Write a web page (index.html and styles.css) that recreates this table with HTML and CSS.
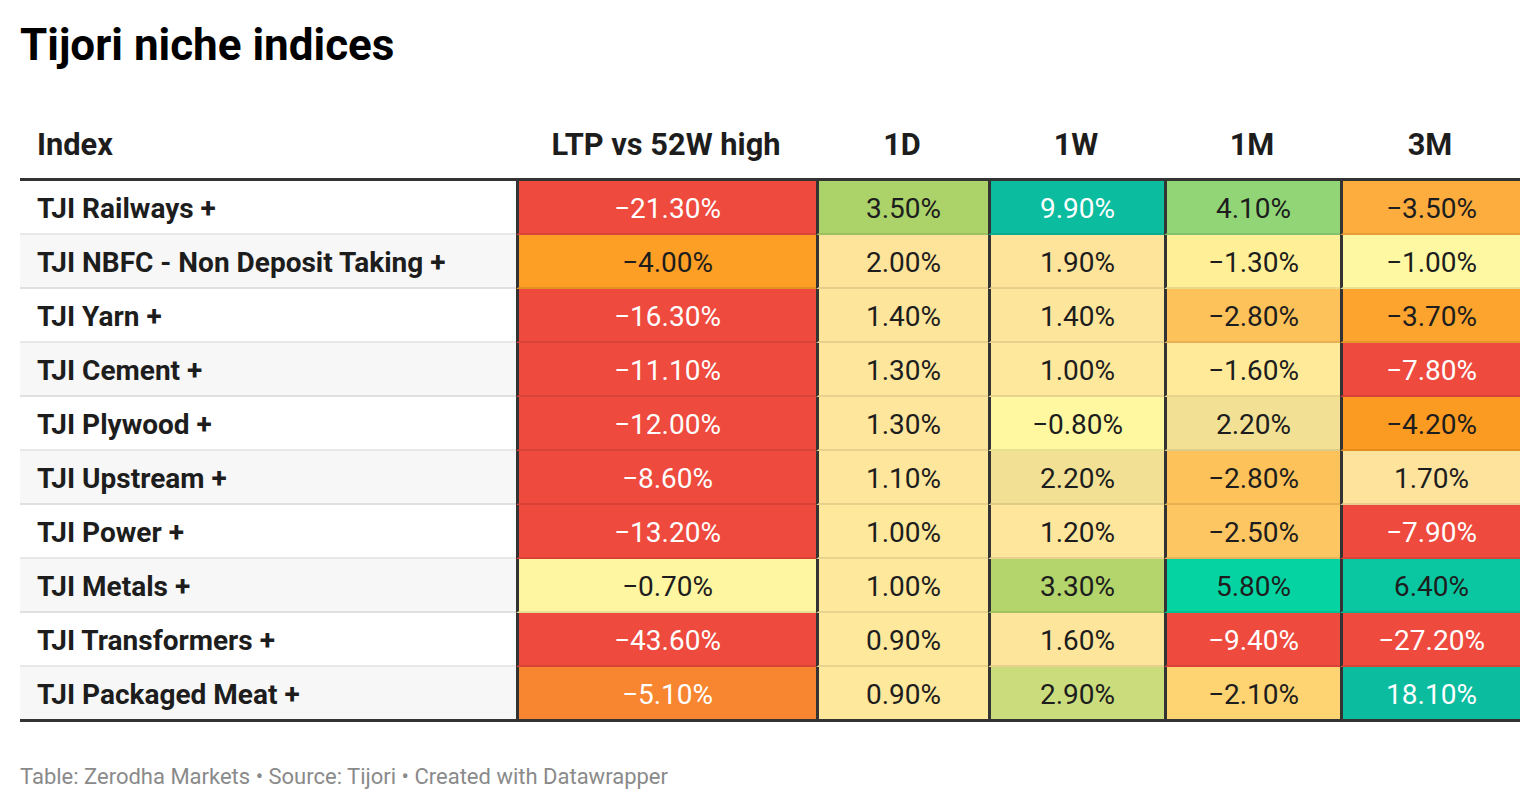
FILE: index.html
```html
<!DOCTYPE html>
<html lang="en">
<head>
<meta charset="utf-8">
<title>Tijori niche indices</title>
<link rel="stylesheet" href="styles.css">
</head>
<body>
<div class="chart">
  <h1 class="title">Tijori niche indices</h1>
  <div class="table">
    <div class="th th-left">Index</div>
    <div class="th">LTP vs 52W high</div>
    <div class="th">1D</div>
    <div class="th">1W</div>
    <div class="th">1M</div>
    <div class="th">3M</div>

    <div class="name">TJI Railways +</div>
    <div class="val light" style="background:#ee4a3e">−21.30%</div>
    <div class="val" style="background:#acd26a">3.50%</div>
    <div class="val light" style="background:#0bbc9f">9.90%</div>
    <div class="val" style="background:#92d577">4.10%</div>
    <div class="val" style="background:#fdad3d">−3.50%</div>

    <div class="name alt">TJI NBFC - Non Deposit Taking +</div>
    <div class="val" style="background:#fd9f24">−4.00%</div>
    <div class="val" style="background:#fee39b">2.00%</div>
    <div class="val" style="background:#fee49b">1.90%</div>
    <div class="val" style="background:#fff098">−1.30%</div>
    <div class="val" style="background:#fff8a3">−1.00%</div>

    <div class="name">TJI Yarn +</div>
    <div class="val light" style="background:#ee4a3e">−16.30%</div>
    <div class="val" style="background:#fee59c">1.40%</div>
    <div class="val" style="background:#fee59c">1.40%</div>
    <div class="val" style="background:#fec25b">−2.80%</div>
    <div class="val" style="background:#fca42e">−3.70%</div>

    <div class="name alt">TJI Cement +</div>
    <div class="val light" style="background:#ee4a3e">−11.10%</div>
    <div class="val" style="background:#fee69c">1.30%</div>
    <div class="val" style="background:#fee89c">1.00%</div>
    <div class="val" style="background:#feea98">−1.60%</div>
    <div class="val light" style="background:#ee4a3e">−7.80%</div>

    <div class="name">TJI Plywood +</div>
    <div class="val light" style="background:#ee4a3e">−12.00%</div>
    <div class="val" style="background:#fee69c">1.30%</div>
    <div class="val" style="background:#fff8a0">−0.80%</div>
    <div class="val" style="background:#f2e195">2.20%</div>
    <div class="val" style="background:#fb9b21">−4.20%</div>

    <div class="name alt">TJI Upstream +</div>
    <div class="val light" style="background:#ee4a3e">−8.60%</div>
    <div class="val" style="background:#fee79c">1.10%</div>
    <div class="val" style="background:#f2e195">2.20%</div>
    <div class="val" style="background:#fec25b">−2.80%</div>
    <div class="val" style="background:#fee39d">1.70%</div>

    <div class="name">TJI Power +</div>
    <div class="val light" style="background:#ee4a3e">−13.20%</div>
    <div class="val" style="background:#fee89c">1.00%</div>
    <div class="val" style="background:#fee69c">1.20%</div>
    <div class="val" style="background:#fec662">−2.50%</div>
    <div class="val light" style="background:#ee4a3e">−7.90%</div>

    <div class="name alt">TJI Metals +</div>
    <div class="val" style="background:#fff6a2">−0.70%</div>
    <div class="val" style="background:#fee89c">1.00%</div>
    <div class="val" style="background:#b4d46c">3.30%</div>
    <div class="val" style="background:#06d3a2">5.80%</div>
    <div class="val" style="background:#0ac7a2">6.40%</div>

    <div class="name">TJI Transformers +</div>
    <div class="val light" style="background:#ee4a3e">−43.60%</div>
    <div class="val" style="background:#fee89c">0.90%</div>
    <div class="val" style="background:#fee59c">1.60%</div>
    <div class="val light" style="background:#ee4a3e">−9.40%</div>
    <div class="val light" style="background:#ee4a3e">−27.20%</div>

    <div class="name alt last">TJI Packaged Meat +</div>
    <div class="val light last" style="background:#f8852f">−5.10%</div>
    <div class="val last" style="background:#fee89c">0.90%</div>
    <div class="val last" style="background:#cbdc7d">2.90%</div>
    <div class="val last" style="background:#fed473">−2.10%</div>
    <div class="val light last" style="background:#0bbc9f">18.10%</div>
  </div>
  <p class="footer">Table: Zerodha Markets • Source: Tijori • Created with Datawrapper</p>
</div>
</body>
</html>
```

FILE: styles.css
```css
* { box-sizing: border-box; }

html, body {
  margin: 0;
  padding: 0;
  background: #ffffff;
}

body {
  font-family: Roboto, "Liberation Sans", Arial, sans-serif;
  color: #1d1d1d;
}

.chart {
  padding: 0 20px;
}

.title {
  margin: 0;
  padding-top: 19px;
  height: 70px;
  font-size: 44px;
  line-height: 52px;
  font-weight: 700;
  color: #000;
}

.table {
  display: grid;
  grid-template-columns: 496px 300px 172px 176px 176px 180px;
}

.th {
  padding: 58px 0 16px;
  height: 111px;
  font-size: 30.8px;
  line-height: 34px;
  font-weight: 700;
  text-align: center;
  border-bottom: 3px solid #333;
}

.th-left {
  text-align: left;
  padding-left: 17px;
}

.name,
.val {
  height: 54px;
  padding-top: 4px;
  font-size: 28px;
  line-height: 48px;
  border-bottom: 2px solid rgba(0, 0, 0, 0.09);
  white-space: nowrap;
}

.name {
  padding-left: 17px;
  font-weight: 700;
  background: #fff;
}

.name.alt {
  background: #f7f7f7;
}

.val {
  text-align: center;
  border-left: 3px solid #333;
  font-variant-numeric: tabular-nums;
}

.val.light {
  color: #fff;
}

.last {
  height: 55px;
  border-bottom: 3px solid #333;
}

.footer {
  margin: 42px 0 0;
  font-size: 22px;
  line-height: 26px;
  color: #8a8a8a;
}
```
